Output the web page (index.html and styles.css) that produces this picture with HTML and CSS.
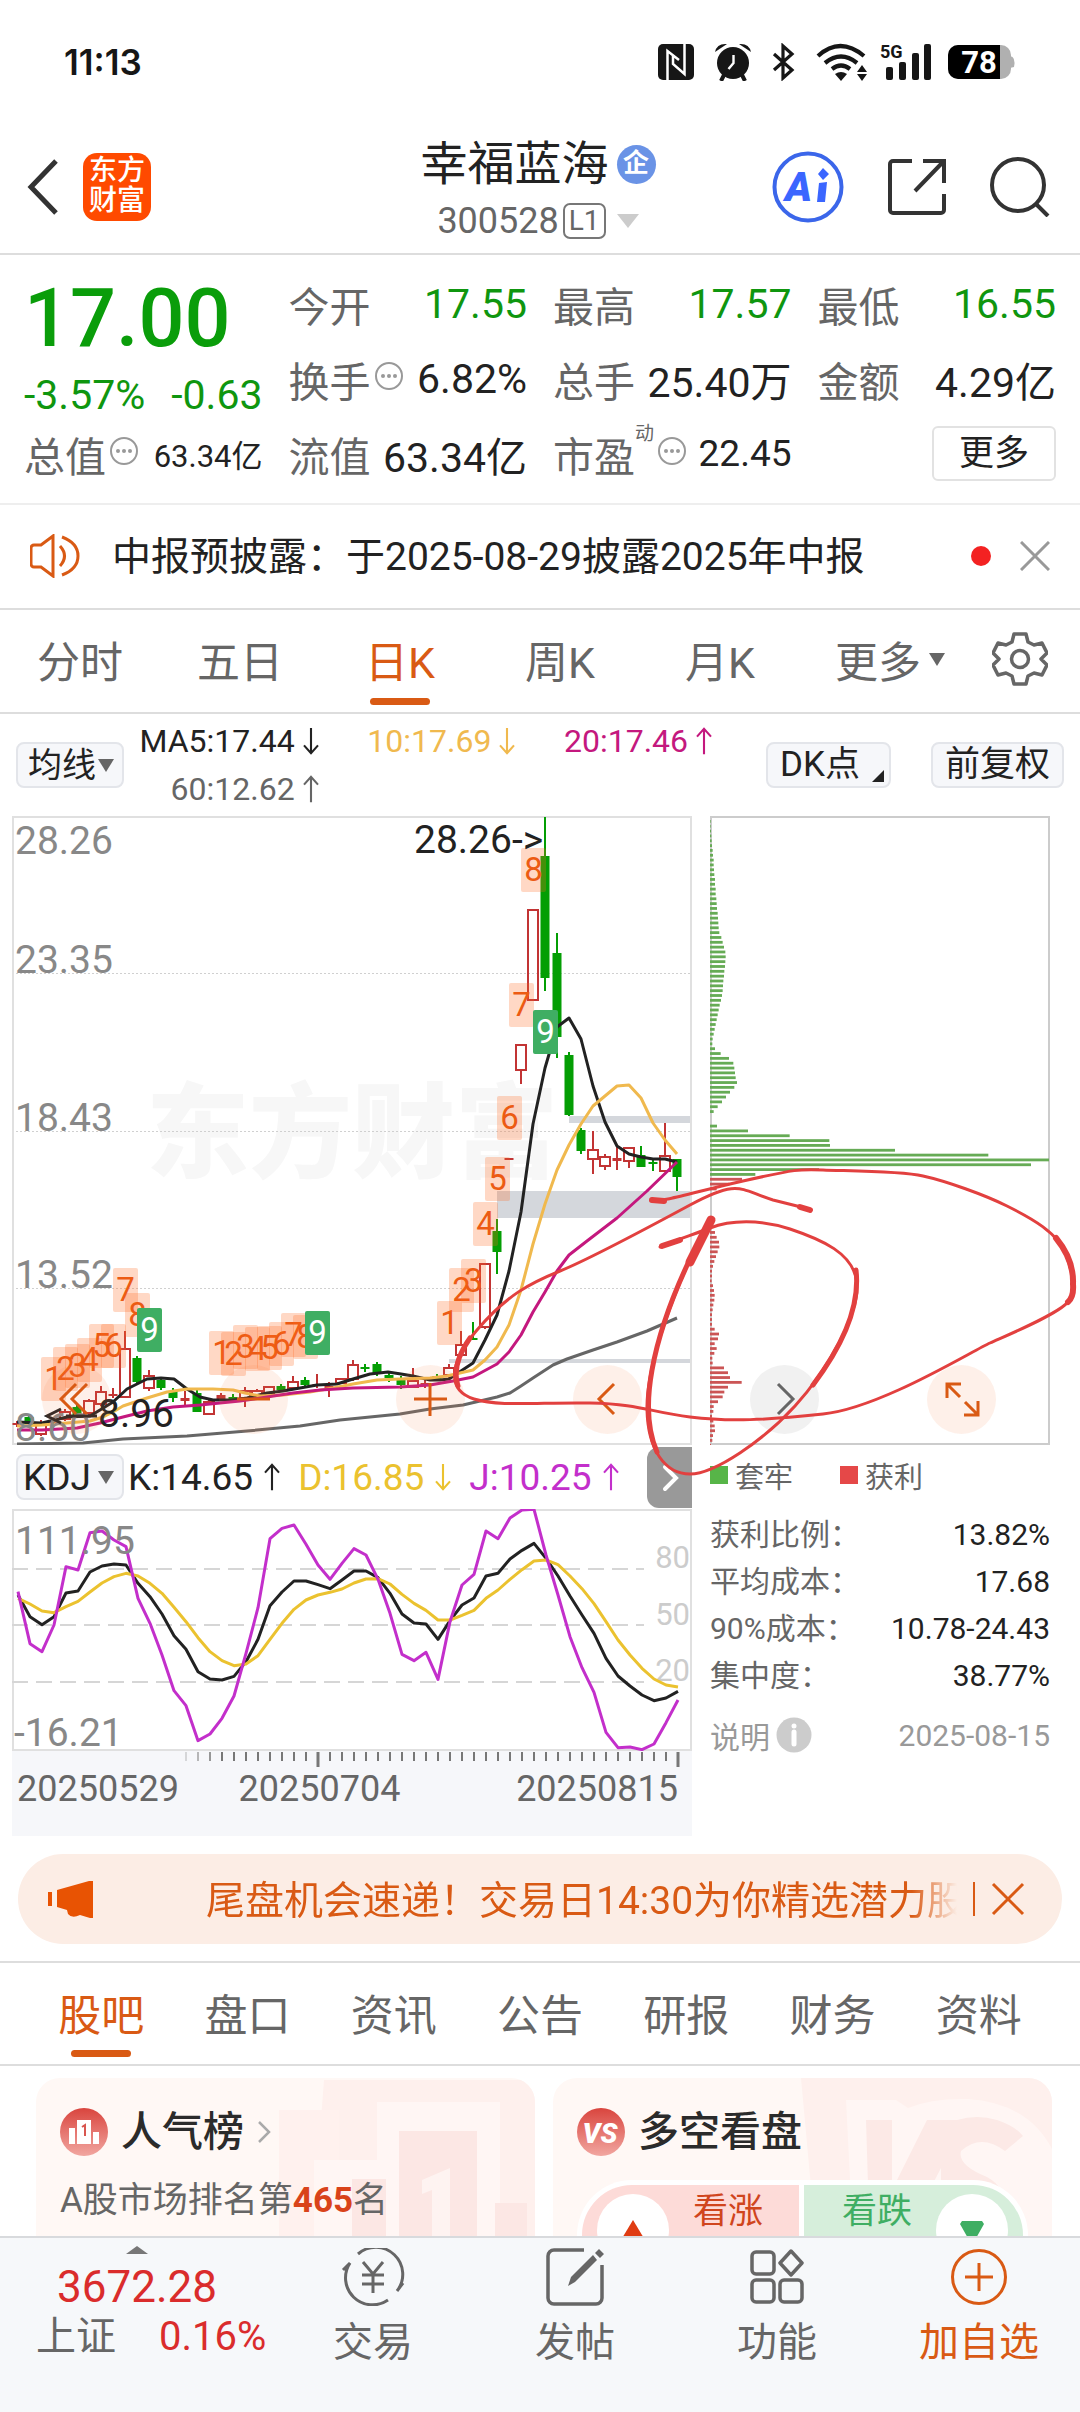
FILE: index.html
```html
<!DOCTYPE html>
<html lang="zh-CN">
<head>
<meta charset="utf-8">
<meta name="viewport" content="width=device-width, initial-scale=1">
<title>幸福蓝海 300528</title>
<link rel="stylesheet" href="styles.css">
</head>
<body>
<svg class="defs" aria-hidden="true">
  <symbol id="up" viewBox="0 0 20 32"><path d="M10 31V2M2 11l8-9 8 9" fill="none" stroke="currentColor" stroke-width="2.4"/></symbol>
  <symbol id="down" viewBox="0 0 20 32"><path d="M10 1v29M2 21l8 9 8-9" fill="none" stroke="currentColor" stroke-width="2.4"/></symbol>
  <symbol id="dots" viewBox="0 0 30 30"><circle cx="15" cy="15" r="13" fill="none" stroke="#999" stroke-width="2"/><g fill="#999"><circle cx="9" cy="15" r="2"/><circle cx="15" cy="15" r="2"/><circle cx="21" cy="15" r="2"/></g></symbol>
</svg>
<div class="app">
  <div class="status">
    <span class="clock">11:13</span>
    <div class="status-icons">
      <svg width="36" height="36" viewBox="0 0 36 36"><rect width="36" height="36" rx="5" fill="#161616"/><path d="M9.500 36V7L21 16M26.500 0v30L15 20V12" fill="none" stroke="#fff" stroke-width="2.5"/></svg>
      <svg class="i-alarm" width="38" height="38" viewBox="0 0 38 38"><circle cx="19" cy="20" r="16" fill="#161616"/><path d="M19.500 12v8l-5 6" fill="none" stroke="#fff" stroke-width="2.4"/><path d="M1 9Q3 0 13 1zM37 9Q35 0 25 1z" fill="#161616"/><path d="M10 32l-3 6M28 32l3 6" fill="none" stroke="#161616" stroke-width="4"/></svg>
      <svg class="i-bt" width="24" height="38" viewBox="0 0 24 38"><path d="M2 11l18 16-9 8V3l9 8L2 27" fill="none" stroke="#161616" stroke-width="3.2"/></svg>
      <svg class="i-wifi" width="52" height="38" viewBox="0 0 52 38"><g fill="none" stroke="#161616" stroke-width="4.2"><path d="M2 13q22-20 46 0M9 20q16-13 32 0M16 26q9-7 18 0"/></g><path d="M19 31q6-4 12 0l-6 7z" fill="#161616"/><path d="M41 29l5-7 5 7zM41 31l5 7 5-7z" fill="#161616"/></svg>
      <svg class="i-signal" width="54" height="38" viewBox="0 0 54 38"><text x="0" y="15" class="g5">5G</text><g fill="#161616"><rect x="6" y="24" width="7" height="13" rx="2"/><rect x="19" y="19" width="7" height="18" rx="2"/><rect x="32" y="10" width="7" height="27" rx="2"/><rect x="44" y="1" width="7" height="36" rx="2"/></g></svg>
      <svg class="i-bat" width="68" height="34" viewBox="0 0 68 34"><rect width="63" height="34" rx="10" fill="#b0b0b0"/><path d="M62 11q6 1 4 11l-4 1z" fill="#b0b0b0"/><path d="M10 0h42v34H10A10 10 0 0 1 0 24V10A10 10 0 0 1 10 0z"/><text x="31" y="28" class="bat">78</text></svg>
    </div>
  </div>

  <header class="top">
    <div class="top-left">
      <button class="icon-btn" aria-label="返回"><svg width="34" height="56" viewBox="0 0 34 56"><path d="M30 2L5 28l25 26" fill="none" stroke="#333" stroke-width="5"/></svg></button>
      <a class="logo" href="#">东方<br>财富</a>
    </div>
    <div class="title">
      <h1>幸福蓝海<span class="corp">企</span></h1>
      <div class="code">300528<span class="lv">L1</span><i class="tri-code"></i></div>
    </div>
    <div class="top-right">
      <button class="icon-btn" aria-label="Ai"><svg width="72" height="72" viewBox="0 0 72 72"><circle cx="36" cy="36" r="33.500" fill="none" stroke="#3b66ea" stroke-width="4"/><text x="13" y="50" class="ai">A</text><path d="M47 32l8-1-2 20h-8zM51 17l6 6-6 6-5-6z" fill="#3b66ff"/></svg></button>
      <button class="icon-btn" aria-label="分享"><svg width="58" height="58" viewBox="0 0 58 58"><path d="M24 3H5a3 3 0 0 0-3 3v46a3 3 0 0 0 3 3h48a3 3 0 0 0 3-3V36M35 3h21v22M55 4L27 33" fill="none" stroke="#333" stroke-width="4"/></svg></button>
      <button class="icon-btn" aria-label="搜索"><svg width="60" height="60" viewBox="0 0 60 60"><circle cx="28" cy="28" r="26" fill="none" stroke="#333" stroke-width="4"/><path d="M46 47l12 12" stroke="#333" stroke-width="4"/></svg></button>
    </div>
  </header>

  <section class="quote">
    <div class="price">
      <strong>17.00</strong>
      <div class="cell down"><span>-3.57%</span><span>-0.63</span></div>
    </div>
    <div class="cell"><span class="k">今开</span><span class="down">17.55</span></div>
    <div class="cell"><span class="k">最高</span><span class="down">17.57</span></div>
    <div class="cell"><span class="k">最低</span><span class="down">16.55</span></div>
    <div class="cell"><span class="k">换手<svg class="dots"><use href="#dots"/></svg></span><span>6.82%</span></div>
    <div class="cell"><span class="k">总手</span><span>25.40万</span></div>
    <div class="cell"><span class="k">金额</span><span>4.29亿</span></div>
    <div class="cell"><span class="k">总值<svg class="dots"><use href="#dots"/></svg></span><span class="small">63.34亿</span></div>
    <div class="cell"><span class="k">流值</span><span>63.34亿</span></div>
    <div class="cell"><span class="k">市盈<sup>动</sup><svg class="dots"><use href="#dots"/></svg></span><span class="mid">22.45</span></div>
    <div class="cell end"><button class="more">更多</button></div>
  </section>

  <section class="notice">
    <svg width="52" height="44" viewBox="0 0 52 44"><path d="M23 2v40L11 33H4a3 3 0 0 1-3-3V14a3 3 0 0 1 3-3h7zM30 12q9 10 0 20M32 3q16 6 16 19T32 41" fill="none" stroke="#d95a14" stroke-width="3"/></svg>
    <p>中报预披露：于2025-08-29披露2025年中报</p>
    <i class="dot"></i>
    <button class="icon-btn" aria-label="关闭"><svg width="30" height="30" viewBox="0 0 30 30"><path d="M1 1l28 28M29 1L1 29" stroke="#999" stroke-width="3"/></svg></button>
  </section>

  <nav class="periods">
    <button>分时</button><button>五日</button><button class="on">日K</button><button>周K</button><button>月K</button><button class="has-tri">更多<i></i></button>
    <button aria-label="设置"><svg width="56" height="54" viewBox="0 0 56 54"><path d="M22 2h12l2 8 6 3 8-2 5 10-6 6 6 6-5 10-8-2-6 3-2 8H22l-2-8-6-3-8 2-5-10 6-6-6-6L6 11l8 2 6-3z" fill="none" stroke="#666" stroke-width="3.500" stroke-linejoin="round"/><circle cx="28" cy="27" r="8.500" fill="none" stroke="#666" stroke-width="3.500"/></svg></button>
  </nav>

  <section class="ma">
    <label class="pick"><select aria-label="指标"><option>均线</option></select><i></i></label>
    <div class="ma-list">
      <span>MA5:17.44<svg class="arr"><use href="#down"/></svg></span>
      <span class="y">10:17.69<svg class="arr"><use href="#down"/></svg></span>
      <span class="p">20:17.46<svg class="arr"><use href="#up"/></svg></span>
      <span class="g">60:12.62<svg class="arr"><use href="#up"/></svg></span>
    </div>
    <button class="chip dk">DK点<i></i></button>
    <button class="chip">前复权</button>
  </section>

  <section class="charts">
    <div class="left">
      <svg class="plot" viewBox="12 816 680 629" role="img" aria-label="日K线">
        <text x="146" y="1170" class="mark">东方财富</text>
        <path d="M12 973.500h680M12 1131.500h680M12 1288.500h680" stroke="#d0d0d0" stroke-width="1" stroke-dasharray="2 2"/>
        <path d="M569 1116h123v7H569zM497 1191h195v27H497zM449 1359h243v4H449z" fill="#d4d7dc"/>
        <rect x="13" y="817" width="678" height="627" fill="none" stroke="#e0e0e0" stroke-width="2"/>
        <g id="candles"></g>
        <g fill="none" stroke-width="3" stroke-linejoin="round">
          <polyline stroke="#666" points="17,1444 83,1443 123,1439 187,1436 247,1431 300,1426 340,1420 400,1414 430,1409 463,1405 497,1397 510,1393 521,1386 533,1378 553,1365 567,1359 593,1350 617,1342 647,1331 677,1318"/>
          <polyline stroke="#222" points="17,1422 42,1423 67,1417 90,1416 100,1410 113,1402 127,1389 147,1379 161,1378 174,1379 187,1389 200,1397 213,1400 233,1400 247,1398 267,1393 283,1391 300,1388 317,1385 337,1384 353,1379 370,1374 388,1372 401,1374 413,1376 430,1380 440,1380 449,1379 461,1371 473,1363 485,1340 497,1315 509,1271 521,1212 533,1124 545,1068 557,1027 569,1018 581,1039 593,1086 605,1122 617,1146 629,1154 641,1157 653,1159 665,1159 677,1162"/>
          <polyline stroke="#f0b94e" points="17,1426 42,1425 67,1423 90,1421 103,1417 113,1412 123,1406 147,1398 167,1392 187,1389 213,1389 233,1390 245,1393 260,1396 283,1395 310,1392 333,1388 353,1384 377,1380 400,1379 430,1378 447,1376 473,1370 485,1360 497,1347 509,1325 521,1290 533,1244 545,1204 557,1170 569,1145 581,1124 593,1106 617,1086 629,1085 641,1098 653,1123 665,1140 677,1154"/>
          <polyline stroke="#c4187e" points="17,1430 42,1430 77,1428 100,1423 123,1417 147,1411 173,1407 200,1405 240,1401 267,1397 293,1393 320,1390 353,1388 400,1387 430,1385 453,1381 473,1377 497,1364 509,1352 521,1335 533,1312 545,1292 557,1271 569,1255 587,1241 617,1218 647,1191 677,1162"/>
        </g>
        <g class="axis"><text x="15" y="854">28.26</text><text x="15" y="973">23.35</text><text x="15" y="1131">18.43</text><text x="15" y="1288">13.52</text><text x="15" y="1441">8.60</text></g>
        <g id="counts"></g>
        <g class="peak"><text x="414" y="853">28.26-&gt;</text><text x="98" y="1427">8.96</text></g>
        <path d="M61 1409l-14 7 14 7M66 1416h31" fill="none" stroke="#222" stroke-width="3"/>
      </svg>
      <div class="kdj-head">
        <label class="pick wide"><select aria-label="副图指标"><option>KDJ</option></select><i></i></label>
        <span>K:14.65<svg class="arr"><use href="#up"/></svg></span>
        <span class="ky">D:16.85<svg class="arr"><use href="#down"/></svg></span>
        <span class="kp">J:10.25<svg class="arr"><use href="#up"/></svg></span>
        <button class="next" aria-label="下一个"><svg width="18" height="28" viewBox="0 0 18 28"><path d="M3 3l11 11L3 25" fill="none" stroke="#fff" stroke-width="4" stroke-linecap="round"/></svg></button>
      </div>
      <svg class="plot" viewBox="12 1509 680 242" role="img" aria-label="KDJ">
        <rect x="13" y="1510" width="678" height="240" fill="none" stroke="#e0e0e0" stroke-width="2"/>
        <path d="M12 1569h632M12 1625h632M12 1682h632" stroke="#d6d6d6" stroke-width="2" stroke-dasharray="16 8"/>
        <g class="levels"><text x="690" y="1568">80</text><text x="690" y="1625">50</text><text x="690" y="1681">20</text></g>
        <g id="kdj" fill="none" stroke-width="3" stroke-linejoin="round"></g>
        <g class="axis"><text x="15" y="1554">111.95</text><text x="14" y="1746">-16.21</text></g>
      </svg>
      <div class="dates">
        <svg class="plot" viewBox="12 1751 680 18" aria-hidden="true"><g id="ticks" stroke="#777"></g></svg>
        <div class="date-row"><time>20250529</time><time>20250704</time><time>20250815</time></div>
      </div>
    </div>

    <div class="right">
      <svg class="plot" viewBox="711 816 340 629" role="img" aria-label="筹码分布">
        <rect x="712" y="817" width="338" height="627" fill="none" stroke="#ccc" stroke-width="2"/>
        <g id="chips"></g>
      </svg>
      <div class="legend"><span><i class="lg"></i>套牢</span><span><i class="lr"></i>获利</span></div>
      <dl class="costs">
        <div><dt>获利比例：</dt><dd>13.82%</dd></div>
        <div><dt>平均成本：</dt><dd>17.68</dd></div>
        <div><dt>90%成本：</dt><dd>10.78-24.43</dd></div>
        <div><dt>集中度：</dt><dd>38.77%</dd></div>
      </dl>
      <div class="explain"><a href="#">说明<svg width="36" height="36" viewBox="0 0 36 36"><circle cx="18" cy="18" r="17.500" fill="#ccc"/><path d="M18 15v12" stroke="#fff" stroke-width="5" stroke-linecap="round"/><circle cx="18" cy="9" r="2.500" fill="#fff"/></svg></a><time>2025-08-15</time></div>
    </div>

    <div class="tools">
      <button aria-label="向前"><svg viewBox="0 0 69 69"><path d="M34 19L19 34l15 15M45 19L30 34l15 15"/></svg></button>
      <button aria-label="缩小"><svg viewBox="0 0 69 69"><path d="M18 34h33"/></svg></button>
      <button aria-label="放大"><svg viewBox="0 0 69 69"><path d="M18 34h33M34 18v33"/></svg></button>
      <button aria-label="左移"><svg viewBox="0 0 69 69"><path d="M41 19L26 34l15 15"/></svg></button>
      <button class="gray" aria-label="右移"><svg viewBox="0 0 69 69"><path d="M28 19l15 15-15 15"/></svg></button>
      <button aria-label="全屏"><svg viewBox="0 0 69 69"><path d="M34 19H20v14M20 19l13 13M37 50h14V36M51 50L38 37"/></svg></button>
    </div>

    <svg class="pen" viewBox="0 816 1080 1020" aria-hidden="true">
      <g fill="none" stroke="#e2403f" stroke-width="3" stroke-linecap="round" stroke-linejoin="round">
        <path d="M652 1200C665 1202 690 1193 743 1181S800 1169 823 1170S900 1171 923 1176S985 1195 1007 1206S1060 1233 1067 1257S1078 1290 1068 1302S1010 1334 990 1343S880 1408 823 1414S730 1422 690 1417S640 1404 590 1403S500 1407 474 1399S447 1365 477 1330S530 1283 560 1271S640 1232 690 1205S740 1190 773 1200L809 1209"/>
        <path d="M660 1247C680 1238 690 1236 710 1228S760 1219 790 1229S855 1253 857 1284S826 1372 795 1406S715 1474 690 1474S648 1450 647 1410S668 1308 690 1259L711 1220"/>
        <path d="M652 1200l12 1M662 1246l18-6M800 1207l10 3" stroke-width="6"/>
        <path d="M1056 1238Q1074 1260 1073 1284Q1074 1297 1068 1302" stroke-width="6"/>
        <path d="M690 1262L711 1220" stroke-width="9"/>
        <path d="M657 1452Q643 1420 652 1370T690 1259M856 1270Q862 1320 813 1385M458 1386Q451 1365 470 1338" stroke-width="5"/>
      </g>
    </svg>
  </section>

  <section class="banner-wrap">
    <div class="banner">
      <svg width="48" height="40" viewBox="0 0 48 40"><path d="M3 13v14" stroke="#e85303" stroke-width="4"/><path d="M10 11L42 2h4v37h-3l-10-3q-8 4-12-1l-1-4-10-3z" fill="#e85303"/></svg>
      <p>尾盘机会速递！交易日14:30为你精选潜力股</p>
      <button class="icon-btn" aria-label="关闭"><svg width="34" height="34" viewBox="0 0 34 34"><path d="M2 2l30 30M32 2L2 32" stroke="#d95a14" stroke-width="3"/></svg></button>
    </div>
  </section>

  <nav class="tabs"><button class="on">股吧</button><button>盘口</button><button>资讯</button><button>公告</button><button>研报</button><button>财务</button><button>资料</button></nav>

  <main class="cards">
    <article class="card">
      <svg class="deco" viewBox="0 0 499 240" aria-hidden="true"><path d="M288 2h211v238H270z" fill="#fef0ed"/><path d="M243 32h60v208h-60z" fill="#fff1ee"/><path d="M278 82h68v158h-68zM341 24h123v216H341z" fill="#fff6f4"/><path d="M363 53h78v187h-78zM316 101h34v139h-34zM459 125h32v115h-32z" fill="#fce7e4"/><path d="M386 102l28-12v80h-18v-58l-10 4z" fill="#fef3f1"/></svg>
      <h2><svg width="48" height="48" viewBox="0 0 48 48"><defs><linearGradient id="rg" x2="0" y2="1"><stop stop-color="#d9453e"/><stop offset="1" stop-color="#f1a6a0"/></linearGradient></defs><circle cx="24" cy="24" r="24" fill="url(#rg)"/><path d="M9 20h6v16H9zM17 12h14v24H17zM33 24h6v12h-6z" fill="#fff"/><path d="M22 19l3-2v11" fill="none" stroke="#d9564f" stroke-width="2"/></svg>人气榜<svg class="go" width="14" height="24" viewBox="0 0 14 24"><path d="M2 2l10 10L2 22" fill="none" stroke="#aaa" stroke-width="2.500"/></svg></h2>
      <p>A股市场排名第<b>465</b>名</p>
    </article>
    <article class="card">
      <svg class="deco" viewBox="0 0 499 240" aria-hidden="true"><path d="M248 0h251v240H270z" fill="#fef0ed"/><path d="M293 22h50l12 8q24-10 60-9q60 4 84 50v170H304z" fill="#fff6f4"/><path d="M313 42h26v70l35-70h30q20-6 40 0q18 6 26 16l-18 15q-24-18-44 0q-4 14 26 26q22 12 20 41H388V90l-26 50h-46z" fill="#fce9e6"/></svg>
      <h2><svg width="48" height="48" viewBox="0 0 48 48"><circle cx="24" cy="24" r="24" fill="url(#rg)"/><text x="23" y="35" class="vs">VS</text></svg>多空看盘</h2>
      <div class="vote">
        <button class="rise"><i><svg width="24" height="20" viewBox="0 0 24 20"><path d="M12 0l12 20H0z" fill="#e03c12"/></svg></i>看涨</button>
        <button class="fall">看跌<i><svg width="24" height="20" viewBox="0 0 24 20"><path d="M2 1h20l2 3-9 16H9L0 4z" fill="#3fae63"/></svg></i></button>
      </div>
    </article>
  </main>

  <nav class="bottom">
    <a class="index" href="#"><i></i><strong>3672.28</strong><span><em>上证</em>0.16%</span></a>
    <a href="#"><svg width="66" height="58" viewBox="0 0 66 58"><path d="M18 6A27 27 0 0 1 57 43l6-8M48 52A27 27 0 0 1 10 15l-7 7" fill="none" stroke="#666" stroke-width="3"/><path d="M23 14l10 12 10-12M33 26v19M22 27h22M22 36h22" fill="none" stroke="#666" stroke-width="3"/></svg>交易</a>
    <a href="#"><svg width="58" height="58" viewBox="0 0 58 58"><path d="M38 2H8a6 6 0 0 0-6 6v42a6 6 0 0 0 6 6h42a6 6 0 0 0 6-6V17" fill="none" stroke="#666" stroke-width="3.500"/><path d="M22 38l3-9L47 7l4 5-22 22zM49 5l4-4 5 5-4 4z" fill="#666"/></svg>发帖</a>
    <a href="#"><svg width="54" height="56" viewBox="0 0 54 56"><g fill="none" stroke="#666" stroke-width="3.500"><rect x="2" y="3" width="22" height="22" rx="4"/><rect x="2" y="31" width="22" height="22" rx="4"/><rect x="30" y="31" width="22" height="22" rx="4"/><path d="M41 2l11 12-11 12-11-12z" stroke-linejoin="round"/></g></svg>功能</a>
    <a class="add" href="#"><svg width="58" height="58" viewBox="0 0 58 58"><circle cx="29" cy="29" r="26.500" fill="none" stroke="#d95a14" stroke-width="3"/><path d="M15 29h28M29 15v28" stroke="#d95a14" stroke-width="3"/></svg>加自选</a>
  </nav>
</div>
<script src="charts.js"></script>
</body>
</html>
```
FILE: styles.css
```css
* { box-sizing: border-box; }
body { margin: 0; background: #fff; color: #222; font-family: Roboto, "Noto Sans CJK SC", sans-serif; }
h1, h2, p, dl, dd { margin: 0; font-weight: 400; }
button, select { font: inherit; color: inherit; border: 0; padding: 0; background: none; }
a { color: inherit; text-decoration: none; }
i, em { font-style: normal; }
svg { display: block; flex: none; }
.defs { position: absolute; width: 0; height: 0; }
.app { height: 100vh; display: flex; flex-direction: column; }
.app > * { flex: none; }
.icon-btn { display: block; }

.status { display: flex; justify-content: space-between; align-items: center; height: 124px; padding: 0 64px; }
.clock { font: 600 35px Inter, sans-serif; color: #161616; }
.status-icons { display: flex; align-items: center; }
.i-alarm { margin-left: 20px; }
.i-bt { margin-left: 20px; }
.i-wifi { margin-left: 20px; }
.i-signal { margin-left: 12px; }
.i-signal { overflow: visible; }
.i-bat { margin-left: 14px; }
.g5 { font: 700 18px Roboto, sans-serif; fill: #161616; }
.bat { font: 700 31px Roboto, sans-serif; fill: #fff; text-anchor: middle; }

.top { display: grid; grid-template-columns: 1fr auto 1fr; align-items: center; height: 131px; padding: 0 30px 3px 26px; border-bottom: 2px solid #ddd; }
.top-left { display: flex; align-items: center; gap: 23px; }
.logo { width: 68px; height: 68px; border-radius: 14px; background: #ff4a00; color: #fff; font-size: 28px; font-weight: 500; line-height: 30px; text-align: center; padding-top: 3px; }
.title { text-align: center; padding-top: 12px; }
h1 { display: flex; align-items: center; justify-content: center; gap: 8px; font-size: 47px; line-height: 56px; }
.corp { width: 39px; height: 39px; border-radius: 50%; background: #6a93e6; color: #fff; font-size: 26px; font-weight: 700; line-height: 36px; text-align: center; }
.code { display: flex; align-items: center; justify-content: center; font-size: 36px; line-height: 58px; color: #666; }
.lv { margin-left: 4px; padding: 0 4px; border: 2px solid #777; border-radius: 7px; font-size: 28px; line-height: 32px; }
.tri-code { margin-left: 11px; border: 11px solid transparent; border-top: 14px solid #ccc; border-bottom: 0; }
.top-right { display: flex; justify-content: flex-end; align-items: center; gap: 44px; }
.ai { font: italic 900 41px Roboto, sans-serif; fill: #3b66ff; }

.quote { display: grid; grid-template-columns: repeat(4, 1fr); grid-template-rows: repeat(3, 75px); column-gap: 26px; height: 250px; padding: 11px 24px 0; border-bottom: 2px solid #eee; font-size: 41px; }
.price { grid-row: span 2; color: #0a9d0a; padding-top: 5px; }
.price strong { display: block; font-size: 81px; font-weight: 500; line-height: 96px; }
.price .cell { height: 56px; }
.cell { display: flex; justify-content: space-between; align-items: center; white-space: nowrap; }
.end { justify-content: flex-end; }
.down { color: #0f960f; }
.k { display: flex; align-items: center; color: #666; }
.dots { width: 30px; height: 30px; margin: -6px 0 0 3px; }
.k sup { font-size: 19px; line-height: 20px; align-self: flex-start; }
.small { font-size: 31px; }
.mid { font-size: 37px; }
.more { width: 124px; height: 55px; border: 2px solid #e2e2e2; border-radius: 6px; font-size: 35px; line-height: 48px; }

.notice { display: flex; align-items: center; height: 105px; padding: 0 30px 2px; border-bottom: 2px solid #ddd; font-size: 39px; }
.notice p { flex: 1; padding: 0 0 5px 30px; white-space: nowrap; }
.dot { width: 20px; height: 20px; border-radius: 50%; background: #f32222; margin-right: 29px; }

.periods { display: grid; grid-template-columns: repeat(6, 4fr) 3fr; height: 104px; border-bottom: 2px solid #ddd; font-size: 43px; color: #666; }
.periods button, .tabs button { position: relative; display: flex; align-items: center; justify-content: center; padding-bottom: 4px; }
.on { color: #d95a14; }
.on::after { content: ""; position: absolute; left: 50%; bottom: 7px; width: 60px; height: 7px; margin-left: -30px; border-radius: 4px; background: #d95a14; }
.has-tri { gap: 8px; }
.has-tri i { margin-right: -20px; border: 8px solid transparent; border-top: 13px solid #666; border-bottom: 0; }

.ma { display: flex; align-items: center; height: 102px; padding: 0 16px; font-size: 32px; }
.pick { position: relative; display: flex; align-items: center; height: 46px; width: 108px; padding-left: 10px; border: 2px solid #e3e5ea; border-radius: 8px; background: #f6f7fa; font-size: 34px; }
.pick select { appearance: none; width: 100%; }
.pick i { position: absolute; right: 8px; border: 8px solid transparent; border-top: 13px solid #666; border-bottom: 0; }
.ma-list { flex: 1; display: grid; grid-template-columns: repeat(3, 1fr); row-gap: 16px; line-height: 32px; }
.ma-list span { display: flex; justify-content: flex-end; align-items: center; gap: 6px; white-space: nowrap; }
.arr { width: 20px; height: 28px; }
.y { color: #f0b94e; } .p { color: #c4187e; } .g { color: #666; }
.chip { height: 46px; padding: 0 12px; border: 2px solid #e3e5ea; border-radius: 8px; background: #f6f7fa; font-size: 35px; line-height: 40px; }
.dk { position: relative; margin: 0 40px 0 52px; padding: 0 29px 0 12px; }
.dk i { position: absolute; right: 5px; bottom: 4px; border-left: 12px solid transparent; border-bottom: 12px solid #222; }

.charts { position: relative; display: grid; grid-template-columns: 2fr 1fr; gap: 18px; padding: 0 30px 0 12px; }
.plot { width: 100%; height: auto; }
.plot text { font-family: Roboto, "Noto Sans CJK SC", sans-serif; }
.axis { font-size: 39px; fill: #888; }
.peak { font-size: 39px; fill: #222; }
.levels { font-size: 31px; fill: #ccc; text-anchor: end; }
.mark { font-size: 103px; font-weight: 900; fill: #f7f7f7; }
.count { font-size: 33px; text-anchor: middle; }
.kdj-head { position: relative; display: flex; align-items: center; gap: 16px; height: 64px; padding-left: 4px; font-size: 37px; white-space: nowrap; }
.kdj-head span { display: flex; align-items: center; gap: 9px; }
.kdj-head .pick { margin-right: -12px; padding-left: 5px; font-size: 37px; }
.ky { color: #ebc22f; } .kp { color: #c32fcb; }
.next { position: absolute; right: 0; top: 2px; width: 45px; height: 61px; padding-left: 15px; border-radius: 12px 0 0 12px; background: #999; }
.dates { background: #f6f7fa; height: 85px; }
.date-row { display: flex; justify-content: space-between; padding: 0 14px 0 5px; font-size: 36px; line-height: 40px; color: #666; }
.date-row time:nth-child(2) { margin-right: 56px; }
.right { font-size: 30px; color: #666; }
.legend { display: flex; gap: 47px; height: 60px; margin-bottom: 2px; align-items: center; font-size: 29px; }
.legend span { display: flex; align-items: center; gap: 7px; }
.legend i { width: 18px; height: 18px; }
.lg { background: #57b548; } .lr { background: #e54848; }
.costs { padding-top: 4px; line-height: 47px; }
.costs div, .explain { display: flex; justify-content: space-between; }
.costs dd { color: #222; }
.explain { align-items: center; height: 46px; margin-top: 13px; color: #999; }
.explain a { display: flex; align-items: center; gap: 6px; }
.tools { position: absolute; left: 0; right: 0; top: 549px; display: flex; justify-content: space-between; padding: 0 84px 0 42px; }
.tools button { width: 69px; height: 69px; border-radius: 50%; background: rgba(250, 130, 70, .12); }
.tools path { fill: none; stroke: #d95a14; stroke-width: 3; }
.tools .gray { background: rgba(120, 120, 120, .1); }
.tools .gray path { stroke: #666; }
.pen { position: absolute; left: 0; top: 0; width: 100%; pointer-events: none; }

.banner-wrap { padding: 18px 18px 17px; border-bottom: 2px solid #ddd; }
.banner { display: flex; align-items: center; height: 90px; padding: 0 37px 0 29px; border-radius: 45px; background: #fcede5; color: #d95a14; font-size: 39px; }
.banner p { flex: 1; margin: 0 16px 0 111px; padding-bottom: 5px; overflow: hidden; white-space: nowrap; -webkit-mask-image: linear-gradient(90deg, #000 94%, transparent); mask-image: linear-gradient(90deg, #000 94%, transparent); }
.banner button { padding-left: 16px; border-left: 2px solid #d95a14; }

.tabs { display: grid; grid-template-columns: repeat(7, 1fr); height: 103px; padding: 0 28px; border-bottom: 2px solid #ddd; font-size: 43px; color: #666; }

.app > .cards { flex: 1; min-height: 0; overflow: hidden; display: grid; grid-template-columns: 1fr 1fr; gap: 18px; padding: 12px 28px 0 36px; }
.card { position: relative; height: 240px; padding: 24px 24px 0; border-radius: 24px; background: #fff8f5; overflow: hidden; }
.deco { position: absolute; left: 0; top: 0; width: 100%; }
.card h2, .card p, .vote { position: relative; }
.card h2 { display: flex; align-items: center; gap: 13px; font-size: 41px; font-weight: 500; line-height: 60px; color: #2b2b2b; }
.card p { margin-top: 13px; font-size: 35px; line-height: 52px; color: #666; }
.card b { color: #d9431a; }
.vs { font: italic 900 28px Roboto, sans-serif; fill: #fff; text-anchor: middle; }
.vote { display: flex; gap: 5px; height: 110px; margin: 18px 0 0; padding: 5px; border-radius: 55px; background: #fff; font-size: 35px; }
.vote button { flex: 1; display: flex; align-items: flex-start; justify-content: space-between; line-height: 54px; padding: 0 36px 0 15px; }
.vote i { display: flex; justify-content: center; width: 72px; height: 72px; margin-top: 9px; padding-top: 26px; border-radius: 50%; background: #fff; }
.rise { border-radius: 50px 0 0 50px; background: #fddbd8; color: #d0451d; }
.vote .fall { border-radius: 0 50px 50px 0; background: #d6eedb; color: #3fae63; padding: 0 15px 0 38px; }

.bottom { display: grid; grid-template-columns: 272fr repeat(4, 202fr); height: 176px; border-top: 2px solid #d8dadd; background: #f6f8fa; font-size: 40px; color: #666; }
.bottom a { display: flex; flex-direction: column; align-items: center; padding-top: 10px; gap: 9px; line-height: 56px; white-space: nowrap; }
.bottom svg { height: 58px; }
.bottom .index { align-items: flex-start; gap: 0; padding-left: 36px; line-height: 50px; color: #da2c2c; }
.index i { margin: -2px 0 8px 90px; border: 11px solid transparent; border-bottom: 8px solid #777; border-top: 0; }
.index strong { margin-left: 21px; font-size: 44px; font-weight: 400; }
.index em { margin-right: 43px; color: #666; }
.bottom .add { color: #d95a14; }
```
FILE: charts.js
```js
const NS = 'http://www.w3.org/2000/svg';
function add(parent, tag, attrs, text) {
  const el = document.createElementNS(NS, tag);
  for (const k in attrs) el.setAttribute(k, attrs[k]);
  if (text) el.textContent = text;
  parent.appendChild(el);
}
const $ = id => document.getElementById(id);

// Candles: [type, body top, body bottom, wick top, wick bottom]; r = hollow, f = filled red, g = green
const candles = [
  ['f',1423,1425,1421,1427],['g',1417,1424,1415,1426],['r',1423,1434,1420,1436],['f',1422,1425,1419,1428],
  ['r',1412,1419,1409,1421],['g',1407,1415,1405,1416],['r',1401,1413,1399,1415],['r',1392,1404,1386,1406],
  ['f',1394,1396,1388,1398],['r',1349,1397,1331,1397],['g',1358,1382,1356,1383],['r',1376,1388,1370,1391],
  ['g',1380,1388,1378,1390],['g',1391,1398,1388,1402],['f',1398,1401,1391,1406],['g',1393,1412,1390,1412],
  ['r',1402,1414,1400,1414],['f',1395,1400,1393,1401],['g',1397,1399,1394,1402],['r',1391,1398,1387,1407],
  ['r',1391,1397,1389,1398],['r',1387,1393,1387,1393],['g',1386,1390,1384,1391],['r',1382,1388,1376,1390],
  ['g',1380,1385,1377,1387],['f',1384,1386,1374,1388],['f',1386,1388,1382,1397],['r',1379,1383,1379,1383],
  ['r',1365,1379,1360,1381],['g',1367,1369,1364,1372],['g',1364,1373,1362,1376],['g',1375,1378,1373,1382],
  ['g',1380,1385,1376,1389],['r',1381,1387,1368,1387],['f',1383,1385,1380,1388],['g',1376,1379,1374,1381],
  ['r',1368,1375,1364,1379],['r',1345,1355,1331,1357],['g',1338,1340,1322,1340],['r',1264,1327,1264,1329],
  ['g',1231,1252,1219,1274],['f',1158,1160,1158,1160],['r',1045,1070,1045,1084],['r',910,1000,910,1000],
  ['g',856,978,817,991],['g',953,1037,933,1058],['g',1055,1115,1052,1116],['g',1130,1151,1128,1154],
  ['r',1150,1159,1131,1174],['r',1157,1166,1154,1170],['f',1158,1161,1147,1170],['r',1148,1161,1148,1168],
  ['g',1155,1167,1146,1167],['g',1162,1164,1160,1171],['r',1156,1171,1123,1171],['g',1159,1177,1159,1191]
];
candles.forEach(([t, a, b, hi, lo], i) => {
  const x = 17 + 12 * i, color = t === 'g' ? '#049e04' : '#c23434';
  if (t === 'r') {
    add($('candles'), 'path', { d: `M${x} ${hi}V${a}M${x} ${b}V${lo}`, stroke: color, 'stroke-width': 2 });
    add($('candles'), 'rect', { x: x - 5, y: a, width: 10, height: b - a, fill: 'none', stroke: color, 'stroke-width': 2 });
  } else {
    add($('candles'), 'path', { d: `M${x} ${hi}V${lo}`, stroke: color, 'stroke-width': 2 });
    add($('candles'), 'rect', { x: x - 4.5, y: a, width: 9, height: b - a, fill: color });
  }
});

// Nine-count markers: first x of each run, then the top of each box
[[41, [1357,1347,1344,1338,1324,1324,1268,1293,1308]],
 [209, [1331,1332,1325,1327,1326,1322,1313,1315,1311]],
 [437, [1301,1268,1259,1202,1157,1096,983,848,1010]]].forEach(([x0, tops]) => tops.forEach((y, n) => {
  const x = x0 + 12 * n, nine = n === 8;
  add($('counts'), 'rect', { x, y, width: 25, height: 44, rx: 2, fill: nine ? '#3fae63' : '#ff6a20', 'fill-opacity': nine ? 1 : .26 });
  add($('counts'), 'text', { x: x + 12.5, y: y + 33, class: 'count', fill: nine ? '#fff' : '#ec5b13' }, String(n + 1));
}));

// Offsets from the top of the header strip, three units to a pixel
const kdj = {
  '#222': [465,530,554,530,459,453,396,378,372,375,430,470,522,587,628,695,717,720,709,665,598,497,456,423,423,434,446,420,393,393,413,460,522,549,552,598,542,495,474,408,400,357,331,310,355,408,468,525,580,655,708,738,765,782,774,754],
  '#ebc22f': [475,492,513,518,500,484,456,429,410,400,408,430,460,502,545,593,635,662,677,672,647,598,550,508,480,465,457,447,429,417,416,432,463,490,511,540,540,526,511,475,450,418,389,363,360,374,408,446,491,545,600,645,685,717,735,741],
  '#c32fcb': [455,611,635,555,380,390,278,273,300,320,475,550,645,752,797,902,882,835,768,640,503,296,265,255,313,375,418,370,326,345,418,520,643,662,637,718,545,435,403,273,296,234,210,208,345,465,590,683,757,877,923,921,929,912,848,780]
};
for (const c in kdj) add($('kdj'), 'polyline', { stroke: c, points: kdj[c].map((v, i) => `${18 + 12 * i},${1440 + v / 3}`).join(' ') });

for (let i = 14; i < 56; i++) {
  const major = i === 25 || i === 55;
  add($('ticks'), 'path', { d: `M${18 + 12 * i} 1752v${major ? 15 : 9}`, 'stroke-width': major ? 3 : 2, opacity: i < 18 ? .25 * (i - 13) : 1 });
}

// Chip distribution, top price to bottom; green above the current price, red below
const chips = [2,2,3,4,5,6,8,9,11,11,12,13,15,15,17,17,19,20,21,23,24,25,26,28,34,38,42,46,47,46,45,43,42,40,39,38,36,33,29,26,23,20,17,14,11,8,7,
  15,32,57,70,73,75,77,81,73,60,48,36,23,11,0,0,21,114,239,358,360,555,835,1017,963,327,136,96,58,20,0,0,0,0,0,0,0,5,
  15,20,27,28,23,18,13,9,6,6,5,9,12,14,13,10,8,6,6,6,14,27,24,14,20,13,7,8,42,54,60,95,54,43,38,24,11,10,6,10,14,15,9,7,3];
chips.forEach((w, i) => {
  if (w) add($('chips'), 'rect', { x: 711, y: 820 + i * 4.836, width: w / 3, height: 2.8, fill: i < 74 ? '#66ab55' : '#cb5555' });
});
```
